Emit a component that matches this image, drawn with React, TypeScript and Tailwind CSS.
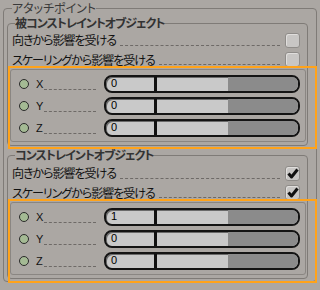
const Checkbox = ({ checked }: { checked?: boolean }) => (
  <div className="flex h-[15px] w-[15px] shrink-0 items-center justify-center rounded-[3px] border border-[#8f8c89] bg-[#c8c6c4] shadow-[inset_1px_1px_0_#e0dedc]">
    {checked && (
      <svg width="12" height="11" viewBox="0 0 12 11">
        <path d="M1.5 5.5 L4.5 9 L10.5 1.5" stroke="#111" strokeWidth="3" fill="none" strokeLinejoin="round" />
      </svg>
    )}
  </div>
);

const OptionRow = ({ label, checked, h }: { label: string; checked?: boolean; h: string }) => (
  <div className={`flex items-center pl-[4px] pr-[7px] ${h}`}>
    <span className="text-[12px] leading-[14px] tracking-[-1px] text-[#111]">{label}</span>
    <div className="mb-[4px] ml-[4px] mr-[5px] flex-1 self-end border-b border-dashed border-[#6e6a67]" />
    <Checkbox checked={checked} />
  </div>
);

const Slider = ({ value }: { value: string }) => (
  <div className="flex h-[18px] w-[196px] overflow-hidden rounded-[8px] border-2 border-[#141414] bg-[#c9c9c9] shadow-[inset_1px_1px_0_#6a6a6a]">
    <div className="w-[48px] pl-[5px] pt-[1px] font-['Liberation_Sans',sans-serif] text-[11px] leading-[11px] text-black">
      {value}
    </div>
    <div className="w-[3px] bg-[#111]" />
    <div className="w-[71px]" />
    <div className="flex-1 bg-[#8b8b8b]" />
  </div>
);

const AxisRow = ({ axis, value }: { axis: string; value: string }) => (
  <div className="flex h-[18px] items-center">
    <div className="h-[10px] w-[10px] shrink-0 rounded-full border border-[#2a2a2a] bg-[#a4ba94]" />
    <span className="ml-[7px] font-['Liberation_Sans',sans-serif] text-[11px] leading-[12px] text-[#111]">{axis}</span>
    <div className="mb-[3px] ml-[1px] mr-[8px] flex-1 self-end border-b border-dashed border-[#6e6a67]" />
    <Slider value={value} />
  </div>
);

const Group = ({ title, checked, values, className, legend }: { title: string; checked: boolean; values: string[]; className: string; legend: string }) => (
  <fieldset className={`ml-[3px] mr-[8px] rounded-[4px] border border-[#7f7b77] pb-[3px] ${className}`}>
    <legend className={`ml-[7px] text-[12px] font-bold tracking-[-1px] text-[#333] ${legend}`}>{title}</legend>
    <OptionRow label="向きから影響を受ける" checked={checked} h="h-[20px]" />
    <OptionRow label="スケーリングから影響を受ける" checked={checked} h="h-[19px]" />
    <div className="ml-[2px] mr-[1px] flex flex-col gap-[4px] rounded-[3px] border border-[#8a8682] pb-[4px] pl-[8px] pr-[5px] pt-[5px]">
      {['X', 'Y', 'Z'].map((a, i) => (
        <AxisRow key={a} axis={a} value={values[i]} />
      ))}
    </div>
  </fieldset>
);

export default function App() {
  return (
    <div className="relative h-[290px] w-[320px] overflow-hidden bg-[#aba7a3] font-['Noto_Sans_CJK_JP',sans-serif] [font-feature-settings:'palt']">
      <fieldset className="ml-[3px] w-[314px] rounded-[4px] border border-[#7f7b77] pb-[2px]">
        <legend className="ml-[8px] text-[12px] leading-[16px] text-[#3a3a3a]">アタッチポイント</legend>
        <Group title="被コンストレイントオブジェクト" checked={false} values={['0', '0', '0']} className="" legend="leading-[14px]" />
        <Group title="コンストレイントオブジェクト" checked={true} values={['1', '0', '0']} className="mt-[1px]" legend="leading-[16px]" />
      </fieldset>

      {/* orange highlight boxes */}
      <div className="pointer-events-none absolute left-[8px] top-[66px] h-[83px] w-[309px] border-2 border-[#ffa31a]" />
      <div className="pointer-events-none absolute left-[8px] top-[199px] h-[84px] w-[309px] border-2 border-[#ffa31a]" />
    </div>
  );
}
